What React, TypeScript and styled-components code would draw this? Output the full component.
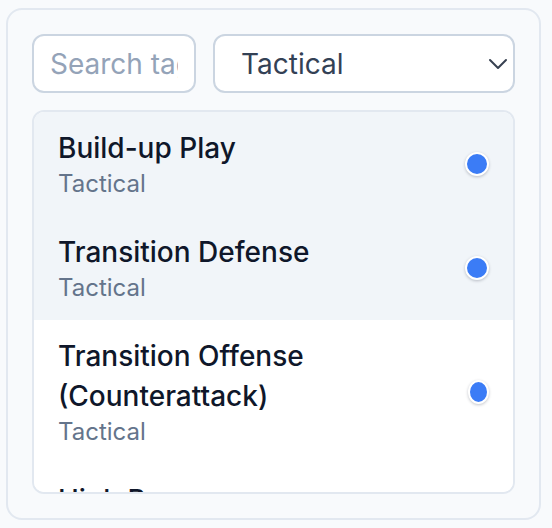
import React from "react";
import styled, { createGlobalStyle } from "styled-components";

const Global = createGlobalStyle`
  html, body {
    margin: 0;
    padding: 0;
    background: #f8fafc;
    font-family: Inter, "Noto Sans", sans-serif;
  }
  * { box-sizing: border-box; }
`;

const Card = styled.div`
  margin: 8px 0 0 6px;
  width: 535px;
  height: 512px;
  background: #f8fafc;
  border: 2px solid #e2e8f0;
  border-radius: 16px;
  padding: 24px;
  display: flex;
  flex-direction: column;
  gap: 17px;
`;

const Toolbar = styled.div`
  display: flex;
  gap: 17px;
  height: 59px;
  flex-shrink: 0;
`;

const SearchInput = styled.input`
  width: 164px;
  height: 100%;
  border: 2px solid #cbd5e1;
  border-radius: 12px;
  background: #ffffff;
  padding: 0 16px;
  font-family: Inter, sans-serif;
  font-size: 28px;
  color: #334155;
  outline: none;
  &::placeholder {
    color: #94a3b8;
  }
`;

const SelectWrap = styled.div`
  position: relative;
  flex: 1;
  height: 100%;
`;

const Select = styled.select`
  appearance: none;
  width: 100%;
  height: 100%;
  border: 2px solid #cbd5e1;
  border-radius: 12px;
  background: #ffffff;
  padding: 0 48px 0 26px;
  font-family: Inter, sans-serif;
  font-size: 28px;
  color: #334155;
  outline: none;
`;

const Chevron = styled.svg`
  position: absolute;
  right: 7px;
  top: 24px;
  pointer-events: none;
`;

const List = styled.div`
  flex: 1;
  min-height: 0;
  background: #ffffff;
  border: 2px solid #e2e8f0;
  border-radius: 12px;
  overflow: hidden;
  display: flex;
  flex-direction: column;
`;

const Item = styled.div<{ $active?: boolean }>`
  display: flex;
  align-items: center;
  gap: 16px;
  padding: 16px 24px;
  background: ${(p) => (p.$active ? "#f1f5f9" : "#ffffff")};
  flex-shrink: 0;
`;

const Texts = styled.div`
  display: flex;
  flex-direction: column;
  flex: 1 1 auto;
`;

const Title = styled.div`
  font-size: 28px;
  line-height: 40px;
  font-weight: 500;
  color: #0f172a;
`;

const Sub = styled.div`
  font-size: 24px;
  line-height: 32px;
  color: #64748b;
`;

const Dot = styled.span`
  width: 24px;
  height: 24px;
  border-radius: 50%;
  background: #3b7cf6;
  border: 2px solid #ffffff;
  box-shadow: 0 1px 3px rgba(15, 23, 42, 0.25);
`;

const tags = [
  { name: "Build-up Play", cat: "Tactical", active: true },
  { name: "Transition Defense", cat: "Tactical", active: true },
  { name: "Transition Offense (Counterattack)", cat: "Tactical", active: false },
  { name: "High Press", cat: "Tactical", active: false },
];

export default function App() {
  return (
    <>
      <Global />
      <Card>
        <Toolbar>
          <SearchInput placeholder="Search tags..." />
          <SelectWrap>
            <Select defaultValue="Tactical">
              <option>All</option>
              <option>Tactical</option>
              <option>Technical</option>
            </Select>
            <Chevron width="20" height="12" viewBox="0 0 20 12">
              <polyline
                points="2,2 10,10 18,2"
                fill="none"
                stroke="#374151"
                strokeWidth="2"
                strokeLinecap="round"
                strokeLinejoin="round"
              />
            </Chevron>
          </SelectWrap>
        </Toolbar>
        <List>
          {tags.map((t) => (
            <Item key={t.name} $active={t.active}>
              <Texts>
                <Title>{t.name}</Title>
                <Sub>{t.cat}</Sub>
              </Texts>
              <Dot />
            </Item>
          ))}
        </List>
      </Card>
    </>
  );
}
